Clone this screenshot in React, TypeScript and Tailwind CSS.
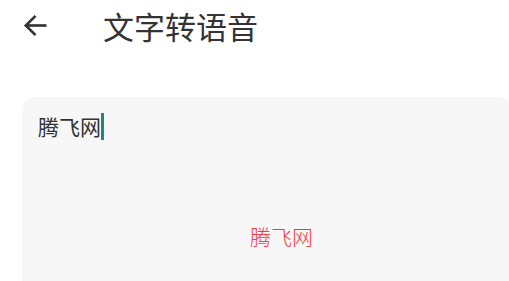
export default function App() {
  return (
    <div className="w-[509px] h-[281px] overflow-hidden bg-white" style={{ fontFamily: '"Noto Sans CJK SC", "Noto Sans", sans-serif' }}>
      <div className="flex items-center h-[50px]">
        <div className="ml-[20px] w-[30px] h-[30px] flex items-center justify-center">
          <svg width="29" height="29" viewBox="0 0 24 24" fill="none" stroke="#333" strokeWidth="2.2" strokeLinecap="square">
            <path d="M20 12H5" />
            <path d="M12 4l-8 8 8 8" strokeLinecap="butt" />
          </svg>
        </div>
        <div className="ml-[53px] text-[31px] leading-none text-[#333]">文字转语音</div>
      </div>
      <div className="ml-[22px] mt-[47px] mr-[-2px] h-[200px] bg-[#f7f7f7] rounded-tl-[14px] rounded-tr-[14px] pt-[14px] pl-[16px]">
        <div className="flex items-center h-[30px]">
          <span className="text-[21px] leading-none text-[#333]">腾飞网</span>
          <span className="w-[3px] h-[27px] bg-[#1a8a78]" />
        </div>
        <div className="mt-[85px] ml-[212px] text-[21px] leading-none text-[#f23b3b] font-light">腾飞网</div>
      </div>
    </div>
  );
}
